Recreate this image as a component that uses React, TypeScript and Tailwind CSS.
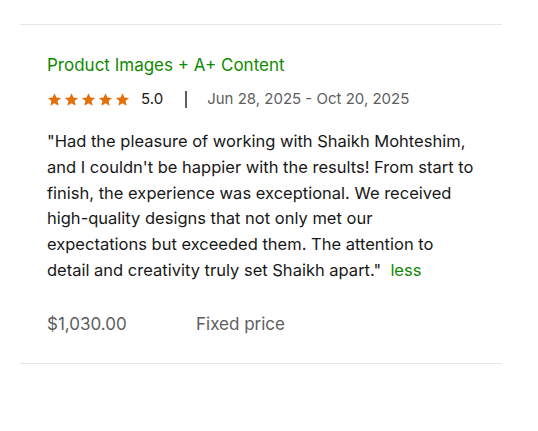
import React from 'react';

function Star() {
  return (
    <svg viewBox="0 0 24 24" className="h-[15px] w-[15px]" fill="#e36f0a">
      <path d="M12 1.8l3.1 6.9 7.4.7-5.6 5 1.7 7.4L12 17.9l-6.6 3.9 1.7-7.4-5.6-5 7.4-.7z" />
    </svg>
  );
}

export default function App() {
  return (
    <div className="min-h-[431px] w-[538px] bg-white font-['Inter',sans-serif]">
      <div className="pt-6">
        <div className="mx-5 w-[482px] border-y border-[#e6e6e6] pl-[27px] pr-[27px] pt-[28px] pb-[27px]">
          <h3 className="text-[17px] leading-6 text-[#108a00]">Product Images + A+ Content</h3>

          <div className="mt-[10px] flex h-6 items-center text-[15px] text-[#181818]">
            <div className="flex gap-[2px]">
              <Star />
              <Star />
              <Star />
              <Star />
              <Star />
            </div>
            <span className="ml-[11px]">5.0</span>
            <span className="ml-[22px] h-[17px] w-[2px] bg-[#5e5e5e]" />
            <span className="ml-[20px] text-[#5e5e5e]">Jun 28, 2025 - Oct 20, 2025</span>
          </div>

          <p className="mt-[18px] text-[16.5px] leading-[25.8px] text-[#181818]">
            "Had the pleasure of working with Shaikh Mohteshim, and I couldn't be happier with the
            results! From start to finish, the experience was exceptional. We received high-quality
            designs that not only met our expectations but exceeded them. The attention to detail and
            creativity truly set Shaikh apart."&nbsp;&nbsp;<span className="cursor-pointer text-[#108a00]">less</span>
          </p>

          <div className="mt-[28px] flex text-[17px] leading-6 text-[#5e5e5e]">
            <span className="w-[149px]">$1,030.00</span>
            <span>Fixed price</span>
          </div>
        </div>
      </div>
    </div>
  );
}
